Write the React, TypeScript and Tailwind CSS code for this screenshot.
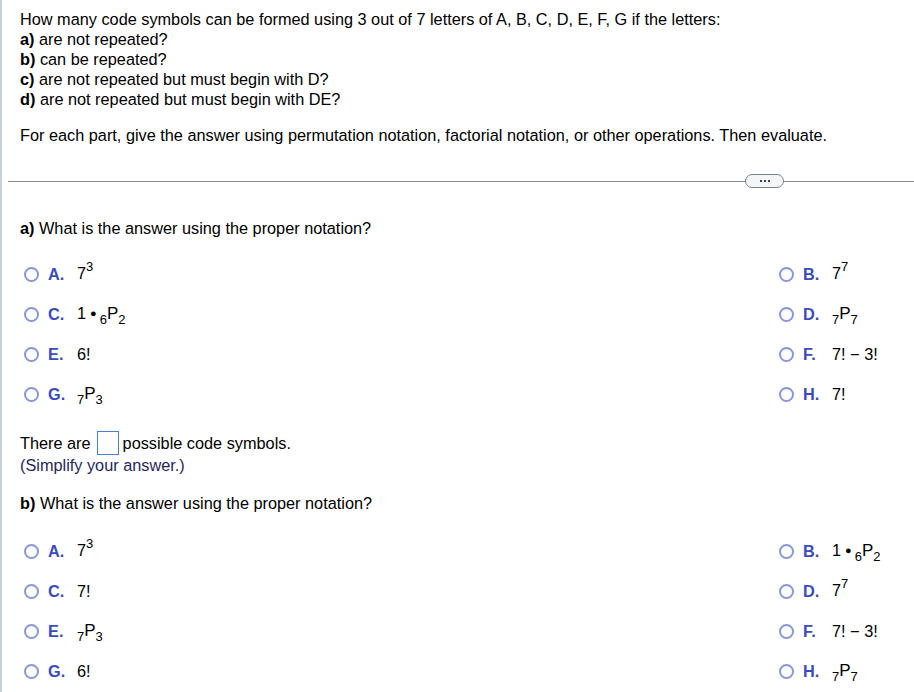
import React from 'react'

type Opt = { key: string; value: React.ReactNode }

const Sup = ({ base, exp }: { base: string; exp: string }) => (
  <span>
    {base}
    <span className="relative -top-[8px] text-[13px]">{exp}</span>
  </span>
)

const Perm = ({ n, r, prefix }: { n: string; r: string; prefix?: string }) => (
  <span>
    {prefix}
    <span className="relative top-[5px] text-[13px]">{n}</span>
    <span className="text-[17px]">P</span>
    <span className="relative top-[5px] text-[13px]">{r}</span>
  </span>
)

const Dot = () => <span className="ml-[4px] mr-[3px] relative -top-[2px] text-[11px]">●</span>

function Option({ opt }: { opt: Opt }) {
  return (
    <div className="flex items-center h-[40px]">
      <span className="ml-[4px] w-[15px] h-[15px] rounded-full border-2 border-[#8797dc] shrink-0" />
      <span className="ml-[9px] w-[29px] font-bold text-[#3a4bbf]">{opt.key}.</span>
      <span className="text-black">{opt.value}</span>
    </div>
  )
}

function OptionGrid({ left, right }: { left: Opt[]; right: Opt[] }) {
  return (
    <div className="flex justify-between">
      <div className="flex flex-col">
        {left.map(o => <Option key={o.key} opt={o} />)}
      </div>
      <div className="flex flex-col w-[139px]">
        {right.map(o => <Option key={o.key} opt={o} />)}
      </div>
    </div>
  )
}

export default function App() {
  const partA = {
    left: [
      { key: 'A', value: <Sup base="7" exp="3" /> },
      { key: 'C', value: <span>1<Dot /><Perm n="6" r="2" /></span> },
      { key: 'E', value: '6!' },
      { key: 'G', value: <Perm n="7" r="3" /> },
    ],
    right: [
      { key: 'B', value: <Sup base="7" exp="7" /> },
      { key: 'D', value: <Perm n="7" r="7" /> },
      { key: 'F', value: '7! − 3!' },
      { key: 'H', value: '7!' },
    ],
  }
  const partB = {
    left: [
      { key: 'A', value: <Sup base="7" exp="3" /> },
      { key: 'C', value: '7!' },
      { key: 'E', value: <Perm n="7" r="3" /> },
      { key: 'G', value: '6!' },
    ],
    right: [
      { key: 'B', value: <span>1<Dot /><Perm n="6" r="2" /></span> },
      { key: 'D', value: <Sup base="7" exp="7" /> },
      { key: 'F', value: '7! − 3!' },
      { key: 'H', value: <Perm n="7" r="7" /> },
    ],
  }

  return (
    <div className="w-[914px] h-[692px] overflow-hidden bg-white border-l-2 border-[#c8cfe0] text-[16.3px] leading-[20px] text-black font-['Liberation_Sans',Arial,sans-serif]">
      <div className="pl-[18px] pt-[9px]">
        <div>How many code symbols can be formed using 3 out of 7 letters of A, B, C, D, E, F, G if the letters:</div>
        <div><b>a)</b> are not repeated?</div>
        <div><b>b)</b> can be repeated?</div>
        <div><b>c)</b> are not repeated but must begin with D?</div>
        <div><b>d)</b> are not repeated but must begin with DE?</div>
        <div className="mt-[16px]">For each part, give the answer using permutation notation, factorial notation, or other operations. Then evaluate.</div>
      </div>

      <div className="flex items-center pl-[6px] mt-[29px] h-[14px]">
        <div className="w-[737px] h-px bg-[#878e98]" />
        <div className="w-[39px] h-[14px] rounded-full border border-[#7a828f] bg-[#f4f5f7] flex items-center justify-center gap-[2px]">
          <span className="w-[2px] h-[2px] bg-[#3d4450]" />
          <span className="w-[2px] h-[2px] bg-[#3d4450]" />
          <span className="w-[2px] h-[2px] bg-[#3d4450]" />
        </div>
        <div className="flex-1 h-px bg-[#878e98]" />
      </div>

      <div className="pl-[18px]">
        <div className="mt-[30px]"><b>a)</b> What is the answer using the proper notation?</div>
        <div className="mt-[16px]">
          <OptionGrid left={partA.left} right={partA.right} />
        </div>
        <div className="mt-[17px] flex items-center h-[24px]">
          <span>There are</span>
          <span className="ml-[6px] mr-[4px] w-[22px] h-[24px] border border-[#4a7fd3] bg-white" />
          <span>possible code symbols.</span>
        </div>
        <div className="text-[#262660]">(Simplify your answer.)</div>
        <div className="mt-[18px]"><b>b)</b> What is the answer using the proper notation?</div>
        <div className="mt-[18px]">
          <OptionGrid left={partB.left} right={partB.right} />
        </div>
      </div>
    </div>
  )
}
